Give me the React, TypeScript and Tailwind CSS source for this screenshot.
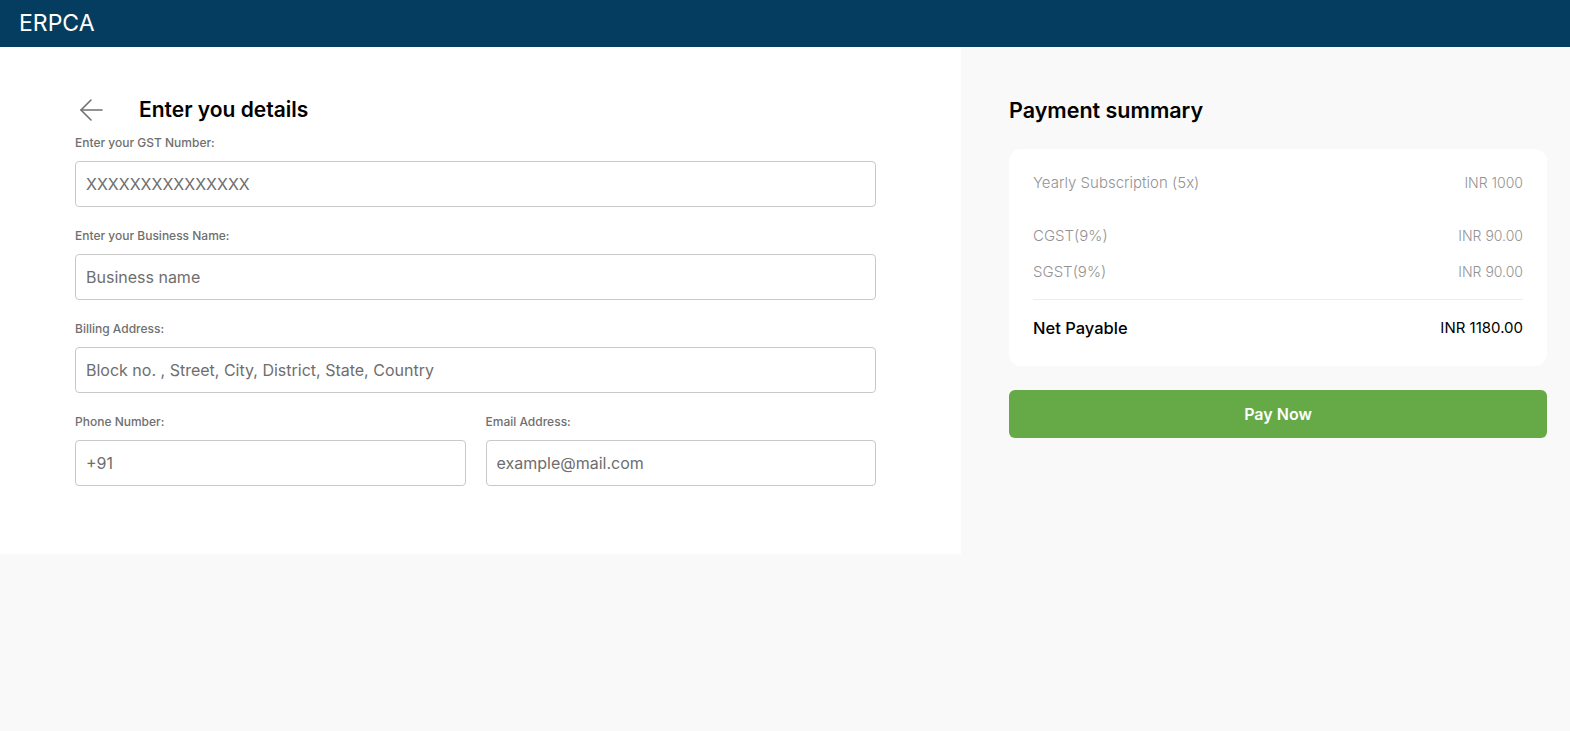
import React from 'react';

const Field = ({ label, placeholder }: { label: string; placeholder: string }) => (
  <div className="flex flex-col flex-1">
    <label className="text-[12px] leading-4 font-medium text-[#6f6f6f]">{label}</label>
    <input
      placeholder={placeholder}
      className="mt-[10px] h-[46px] w-full rounded-[4px] border border-[#c9c9c9] bg-white px-[10px] text-[16px] text-[#333] placeholder:text-[#6e6e6e] outline-none"
    />
  </div>
);

const Row = ({ name, amount }: { name: string; amount: string }) => (
  <div className="flex items-center justify-between text-[15px] leading-5 font-light text-[#939393]">
    <span>{name}</span>
    <span className="text-[14px]">{amount}</span>
  </div>
);

const App = () => {
  return (
    <div className="min-h-screen bg-[#f9f9f9]" style={{ fontFamily: 'Inter, "Open Sans", sans-serif' }}>
      {/* Header */}
      <div className="h-[47px] bg-[#053d61] flex items-center pl-[19px]">
        <span className="text-white text-[23px]">ERPCA</span>
      </div>

      <div className="flex">
        {/* Left form */}
        <div className="w-[961px] bg-white pl-[75px] pr-[85px] pt-[49px] pb-[68px]">
          <div className="flex items-center h-7">
            <svg width="24" height="24" viewBox="0 0 24 24" className="ml-[4px]" fill="none" stroke="#707070" strokeWidth="1.6" strokeLinecap="round" strokeLinejoin="round">
              <path d="M23 12H2" />
              <path d="M12 2L2 12l10 10" />
            </svg>
            <h1 className="ml-[36px] text-[21px] font-semibold text-black">Enter you details</h1>
          </div>

          <div className="mt-[11px] flex flex-col gap-[21px]">
            <Field label="Enter your GST Number:" placeholder="XXXXXXXXXXXXXXX" />
            <Field label="Enter your Business Name:" placeholder="Business name" />
            <Field label="Billing Address:" placeholder="Block no. , Street, City, District, State, Country" />
            <div className="flex gap-[20px]">
              <Field label="Phone Number:" placeholder="+91" />
              <Field label="Email Address:" placeholder="example@mail.com" />
            </div>
          </div>
        </div>

        {/* Right summary */}
        <div className="flex-1 pl-12 pr-[23px] pt-[49px]">
          <div className="flex items-center h-7">
            <h2 className="text-[21.5px] font-semibold text-black">Payment summary</h2>
          </div>

          <div className="mt-[25px] bg-white rounded-xl px-6 pt-6 pb-[27px]">
            <Row name="Yearly Subscription (5x)" amount="INR 1000" />
            <div className="mt-[33px]">
              <Row name="CGST(9%)" amount="INR 90.00" />
            </div>
            <div className="mt-4">
              <Row name="SGST(9%)" amount="INR 90.00" />
            </div>
            <div className="mt-[17px] border-t border-[#ededed]" />
            <div className="mt-[17px] flex items-center justify-between leading-[22px] text-black">
              <span className="text-[16.5px] font-medium">Net Payable</span>
              <span className="text-[15px]">INR 1180.00</span>
            </div>
          </div>

          <button className="mt-[24px] w-full h-12 rounded-md bg-[#65aa47] text-white text-[16px] font-semibold">
            Pay Now
          </button>
        </div>
      </div>
    </div>
  );
};

export default App;
